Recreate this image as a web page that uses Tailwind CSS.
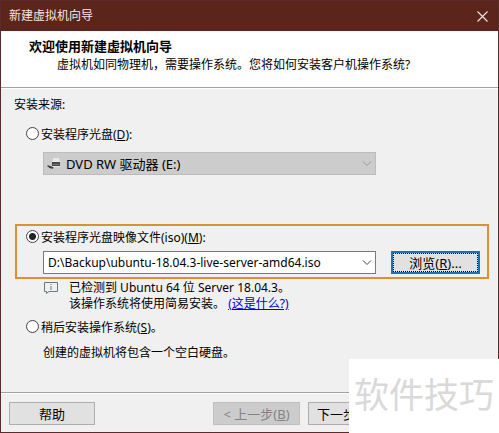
<!DOCTYPE html>
<html lang="zh-CN">

<head>
  <meta charset="UTF-8">
  <meta name="viewport" content="width=device-width, initial-scale=1.0">
  <script src="https://cdn.jsdelivr.net/npm/@tailwindcss/browser@4"></script>
  <title>新建虚拟机向导</title>
</head>

<body class="font-['Noto_Sans','Noto_Sans_CJK_SC',sans-serif] text-[12px] leading-4 text-black">

  <div class="relative flex min-h-screen flex-col border border-[#5c2a2a] bg-[#f0f0f0]">

    <header class="flex h-[30px] items-center justify-between bg-[#5c251b] pr-2 pl-2 text-[#f3e6e3]">
      <h1>新建虚拟机向导</h1>
      <button type="button" aria-label="关闭" class="flex size-4 items-center justify-center">
        <svg class="size-[11px]" viewBox="0 0 11 11" fill="none" stroke="currentColor" stroke-width="1.1">
          <path d="M.5 .5l10 10M10.5 .5l-10 10" />
        </svg>
      </button>
    </header>

    <div class="h-[57px] border-b border-[#a0a0a0] bg-white pt-[7px]">
      <h2 class="pl-7 text-[13px] leading-4 font-bold">欢迎使用新建虚拟机向导</h2>
      <p class="mt-[3px] pl-14">虚拟机如同物理机，需要操作系统。您将如何安装客户机操作系统?</p>
    </div>

    <form id="sourceForm" class="flex grow flex-col border-t border-white">
      <p class="mt-2 pl-[13px]">安装来源:</p>

      <div class="mt-[14px] pl-[25px]">
        <label class="flex h-4 items-start gap-[2px]">
          <input type="radio" name="source" value="disc"
            class="size-[13px] appearance-none rounded-full border border-[#444] bg-white bg-clip-padding checked:bg-[radial-gradient(circle,#222_0_3px,#fff_4px)]">
          <span>安装程序光盘(<u>D</u>):</span>
        </label>
      </div>
      <div class="relative mt-[9px] mr-[122px] ml-[42px]">
        <select aria-label="光盘驱动器" disabled
          class="block h-[23px] w-full appearance-none border border-[#bcbcbc] bg-[#cccccc] pl-[22px] text-[13px] text-black opacity-100">
          <option>DVD RW 驱动器 (E:)</option>
        </select>
        <svg class="absolute top-[6px] left-1 h-3 w-[14px]" viewBox="0 0 14 12">
          <path d="M5 4l1.500-4h5.500l1 4z" fill="#e8e8e8" />
          <path d="M5 4h8v4H5z" fill="#4a4a4a" />
          <path d="M6 6h6v1H6z" fill="#777" />
          <path d="M5 8h8v1.500H5z" fill="#e0e0e0" />
          <path d="M0 8l1-.8 5.500 2-.5 1.500-3-.5z" fill="#3a3a3a" />
        </svg>
        <svg class="pointer-events-none absolute top-[9px] right-1 h-[6px] w-[10px]" viewBox="0 0 10 6" fill="none" stroke="#999">
          <path d="M1 .5l4 4 4-4" />
        </svg>
      </div>

      <div class="mt-[49px] mr-[9px] ml-[14px] border-2 border-[#d9922f] pt-1 pb-[3px] pl-[9px]">
        <label class="flex h-4 items-start gap-[2px]">
          <input type="radio" name="source" value="iso" checked
            class="size-[13px] appearance-none rounded-full border border-[#444] bg-white bg-clip-padding checked:bg-[radial-gradient(circle,#222_0_3px,#fff_4px)]">
          <span>安装程序光盘映像文件(iso)(<u>M</u>):</span>
        </label>
        <div class="mt-[5px] flex items-center gap-[15px] pr-[7px] pl-[17px]">
          <div class="relative grow">
            <input type="text" aria-label="映像文件" value="D:\Backup\ubuntu-18.04.3-live-server-amd64.iso"
              class="block h-[23px] w-full border border-[#7a7a7a] bg-white pr-5 pl-1">
            <svg class="pointer-events-none absolute top-[9px] right-1 h-[6px] w-[10px]" viewBox="0 0 10 6" fill="none" stroke="#444">
              <path d="M1 .5l4 4 4-4" />
            </svg>
          </div>
          <button type="button" class="h-[23px] w-[89px] border-2 border-[#1874b4] bg-[#e1e1e1] text-[13px] outline-1 -outline-offset-3 outline-dotted outline-black">浏览(<u>R</u>)...</button>
        </div>
      </div>

      <div class="mt-[1px] flex gap-[11px] pl-[43px]">
        <svg class="mt-[2px] h-3 w-[14px]" viewBox="0 0 14 12" fill="none" stroke="#667a80">
          <path d="M.5 .5h13v9H5L2.500 11.500V9.500h-2z" />
          <path d="M7 2v1M7 4v4" />
        </svg>
        <p>已检测到 Ubuntu 64 位 Server 18.04.3。<br>该操作系统将使用简易安装。 <a href="#" class="text-[#0000d0] underline">(这是什么?)</a></p>
      </div>

      <div class="mt-2 pl-[25px]">
        <label class="flex h-4 items-start gap-[2px]">
          <input type="radio" name="source" value="later"
            class="size-[13px] appearance-none rounded-full border border-[#444] bg-white bg-clip-padding checked:bg-[radial-gradient(circle,#222_0_3px,#fff_4px)]">
          <span>稍后安装操作系统(<u>S</u>)。</span>
        </label>
        <p class="mt-[9px] pl-[17px]">创建的虚拟机将包含一个空白硬盘。</p>
      </div>
    </form>

    <footer class="border-t border-[#a0a0a0]">
      <div class="flex border-t border-white pt-2 pr-[103px] pb-[7px] pl-2">
        <button type="button" class="h-[23px] w-[86px] border border-[#adadad] bg-[#e1e1e1] text-[13px]">帮助</button>
        <div class="ml-auto flex gap-2">
          <button type="button" disabled class="h-[23px] w-[87px] border border-[#bfbfbf] bg-[#cccccc] text-[13px] text-[#838383]">&lt; 上一步(<u>B</u>)</button>
          <button type="submit" form="sourceForm" class="h-[23px] w-[87px] border border-[#adadad] bg-[#e1e1e1] pl-2 text-left text-[13px]">下一步</button>
        </div>
      </div>
    </footer>

    <div class="absolute -right-px -bottom-px flex h-[74px] w-[150px] items-center justify-center bg-white pb-1 text-[35px] leading-none text-[#d9d9d9]">软件技巧</div>
  </div>

</body>

</html>
